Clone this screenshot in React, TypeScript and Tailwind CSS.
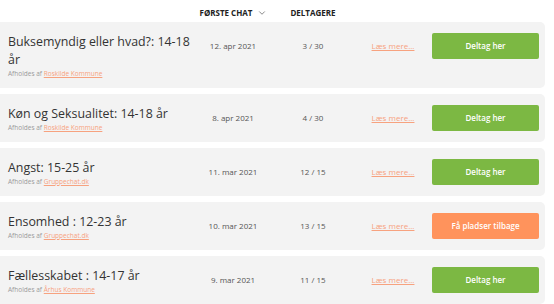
import React from "react";
import { ChevronDown } from "lucide-react";

type Chat = {
  title: string;
  host: string;
  date: string;
  seats: string;
  full?: boolean;
};

const chats: Chat[] = [
  { title: "Buksemyndig eller hvad?: 14-18 år", host: "Roskilde Kommune", date: "12. apr 2021", seats: "3 / 30" },
  { title: "Køn og Seksualitet: 14-18 år", host: "Roskilde Kommune", date: "8. apr 2021", seats: "4 / 30" },
  { title: "Angst: 15-25 år", host: "Gruppechat.dk", date: "11. mar 2021", seats: "12 / 15" },
  { title: "Ensomhed : 12-23 år", host: "Gruppechat.dk", date: "10. mar 2021", seats: "13 / 15", full: true },
  { title: "Fællesskabet : 14-17 år", host: "Århus Kommune", date: "9. mar 2021", seats: "11 / 15" },
];

const cols = "grid grid-cols-[190px_70px_90px_70px_4px_107px]";

export default function App() {
  return (
    <div className="w-[554px] h-[304px] overflow-hidden bg-white font-['Open_Sans',sans-serif] text-[#3b3b3b]">
      {/* Column headers */}
      <div className={`${cols} h-[22px] pl-2 items-center text-[8px] font-bold uppercase text-[#222] pt-[4px]`}>
        <div />
        <div className="flex items-center justify-center gap-[4px]">
          <span>Første chat</span>
          <ChevronDown className="w-[10px] h-[10px] text-[#444]" strokeWidth={1.5} />
        </div>
        <div className="text-center">Deltagere</div>
        <div />
        <div />
        <div />
      </div>

      <div className="flex flex-col gap-[6px]">
        {chats.map((chat, i) => (
          <div
            key={i}
            className={`${cols} w-[545px] pl-2 pr-[6px] pt-[11px] pb-[9px] bg-[#f3f3f3] rounded-r-[5px]`}
          >
            <div>
              <h3 className="text-[12.4px] leading-[18px] font-medium text-[#333]">{chat.title}</h3>
              <p className="text-[6.5px] leading-[10px] text-[#9a9a9a]">
                Afholdes af{" "}
                <a href="#" className="text-[#f7a27f] underline">
                  {chat.host}
                </a>
              </p>
            </div>
            <div className="h-[26px] flex items-center justify-center text-[8px] text-[#555]">{chat.date}</div>
            <div className="h-[26px] flex items-center justify-center text-[8px] text-[#555]">{chat.seats}</div>
            <div className="h-[26px] flex items-center justify-center">
              <a href="#" className="text-[8px] text-[#f7a27f] underline">
                Læs mere...
              </a>
            </div>
            <div />
            <button
              className={`h-[26px] rounded-[2px] text-white text-[8px] font-semibold ${
                chat.full ? "bg-[#ff935c]" : "bg-[#7cb843]"
              }`}
            >
              {chat.full ? "Få pladser tilbage" : "Deltag her"}
            </button>
          </div>
        ))}
      </div>
    </div>
  );
}
